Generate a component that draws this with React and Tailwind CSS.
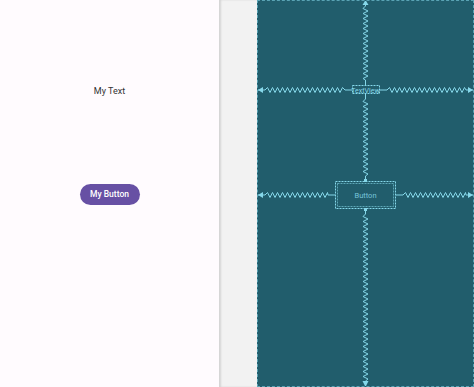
const LINE = "#86d8ea";

// zigzag between two points on one axis, with short straight leads at each end
function zigH(x1, x2, y, lead = 7, amp = 2.5, step = 2.5) {
  let d = `M${x1} ${y} L${x1 + lead} ${y}`;
  let up = true;
  for (let x = x1 + lead + step; x < x2 - lead; x += step) {
    d += ` L${x} ${y + (up ? -amp : amp)}`;
    up = !up;
  }
  d += ` L${x2 - lead} ${y} L${x2} ${y}`;
  return d;
}

function zigV(y1, y2, x, lead = 5, amp = 2.5, step = 2.5) {
  let d = `M${x} ${y1} L${x} ${y1 + lead}`;
  let up = true;
  for (let y = y1 + lead + step; y < y2 - lead; y += step) {
    d += ` L${x + (up ? -amp : amp)} ${y}`;
    up = !up;
  }
  d += ` L${x} ${y2 - lead} L${x} ${y2}`;
  return d;
}

const Blueprint = () => {
  const cx = 108.5;
  return (
    <svg width="217" height="387" viewBox="0 0 217 387" className="block">
      <g stroke={LINE} strokeWidth="1" fill="none">
        {/* vertical chains */}
        <path d={zigV(1, 85, cx)} />
        <path d={zigV(94, 181, cx)} />
        <path d={zigV(209, 386, cx)} />
        {/* horizontal chains */}
        <path d={zigH(1, 95, 90)} />
        <path d={zigH(123, 216, 90)} />
        <path d={zigH(1, 78, 195)} />
        <path d={zigH(139, 216, 195)} />
        {/* TextView box */}
        <rect x="95.5" y="85.5" width="27" height="8" strokeDasharray="2 1" />
        {/* Button box */}
        <rect x="78.5" y="181.5" width="60" height="27" strokeDasharray="2 1" />
        <rect x="80.5" y="183.5" width="56" height="23" strokeDasharray="2 1" opacity="0.6" />
      </g>
      <g fill={LINE}>
        <path d={`M${cx} 0 L${cx - 3} 5 L${cx + 3} 5 Z`} />
        <path d={`M${cx} 387 L${cx - 3} 381 L${cx + 3} 381 Z`} />
        <path d="M1 90 L6 87 L6 93 Z" />
        <path d="M216 90 L211 87 L211 93 Z" />
        <path d="M1 195 L6 192 L6 198 Z" />
        <path d="M216 195 L211 192 L211 198 Z" />
        <rect x={cx - 1.5} y="179" width="3" height="3" />
        <rect x={cx - 1.5} y="208" width="3" height="3" />
      </g>
      <text x={cx} y="92.5" textAnchor="middle" fontSize="7" fill={LINE} fontFamily="Roboto, sans-serif">TextView</text>
      <text x={cx} y="197.5" textAnchor="middle" fontSize="7.5" fill={LINE} opacity="0.85" fontFamily="Roboto, sans-serif">Button</text>
    </svg>
  );
};

const App = () => {
  return (
    <div className="flex w-[474px] h-[387px] overflow-hidden font-['Roboto',sans-serif]">
      <div className="relative w-[219px] h-full bg-[#fffbfe] shrink-0">
        <div className="flex justify-center pt-[85px]">
          <span className="text-[9px] leading-[12px] text-[#333333]">My Text</span>
        </div>
        <div className="flex justify-center mt-[87px]">
          <button className="h-[21px] w-[60px] rounded-full bg-[#6750a4] text-white text-[8.5px] font-medium">My Button</button>
        </div>
      </div>
      <div className="w-[38px] h-full bg-[#f2f2f2] shrink-0 shadow-[inset_2px_0_2px_rgba(0,0,0,0.12)]"></div>
      <div className="w-[217px] h-full bg-[#215d6c] border border-dashed border-[#5aa3b4] shrink-0 overflow-hidden box-border">
        <div className="-m-px">
          <Blueprint />
        </div>
      </div>
    </div>
  );
};

export default App;
